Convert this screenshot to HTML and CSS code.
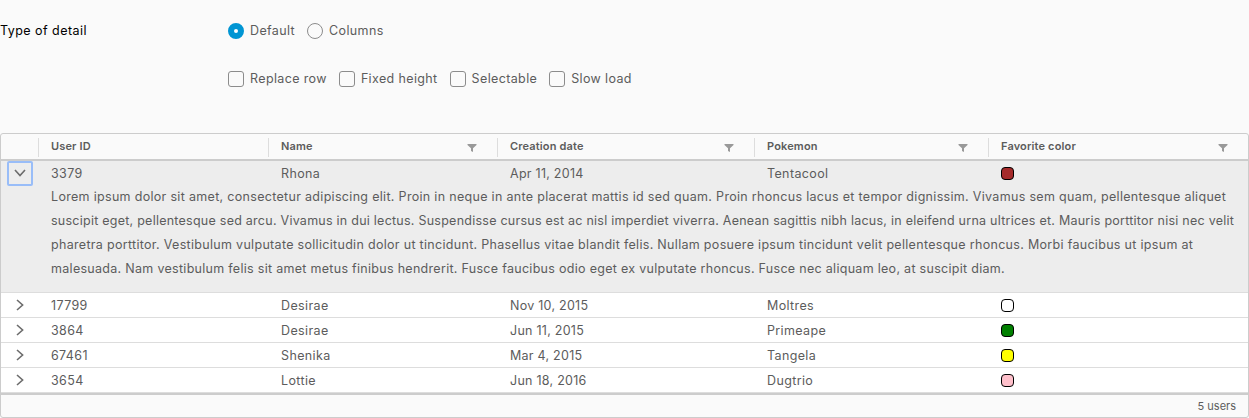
FILE: index.html
```
<!DOCTYPE html>
<html lang="en">
<head>
<meta charset="utf-8">
<title>Datagrid detail</title>
<link rel="stylesheet" href="styles.css">
</head>
<body>
<svg class="defs" width="0" height="0">
  <symbol id="chevron" viewBox="0 0 12 12"><path d="M3 1 8.6 6 3 11" fill="none" stroke="#6c6c6c" stroke-width="1.6"/></symbol>
  <symbol id="filter" viewBox="0 0 10 8"><path d="M.5 0h9v1L6 4.3V8L4 7V4.3L.5 1z" fill="#999"/></symbol>
</svg>
<form class="options">
  <div class="group">
    <span class="title">Type of detail</span>
    <label class="option"><i class="radio on"></i><span>Default</span></label>
    <label class="option"><i class="radio"></i><span>Columns</span></label>
  </div>
  <div class="group">
    <span class="title"></span>
    <label class="option"><i class="check"></i><span>Replace row</span></label>
    <label class="option"><i class="check"></i><span>Fixed height</span></label>
    <label class="option"><i class="check"></i><span>Selectable</span></label>
    <label class="option"><i class="check"></i><span>Slow load</span></label>
  </div>
</form>
<main class="datagrid">
  <div class="row head">
    <div></div>
    <div class="col">User ID</div>
    <div class="col">Name<svg class="filter"><use href="#filter"/></svg></div>
    <div class="col">Creation date<svg class="filter"><use href="#filter"/></svg></div>
    <div class="col">Pokemon<svg class="filter"><use href="#filter"/></svg></div>
    <div class="col">Favorite color<svg class="filter"><use href="#filter"/></svg></div>
  </div>
  <div class="expanded">
    <div class="row">
      <button class="caret focus"><svg class="chevron down"><use href="#chevron"/></svg></button>
      <div class="cell">3379</div><div class="cell">Rhona</div><div class="cell date">Apr 11, 2014</div><div class="cell">Tentacool</div><div class="cell"><i class="swatch brown"></i></div>
    </div>
    <p class="detail">
      <span class="line first">Lorem ipsum dolor sit amet, consectetur adipiscing elit. Proin in neque in ante placerat mattis id sed quam. Proin rhoncus lacus et tempor dignissim. Vivamus sem quam, pellentesque aliquet</span>
      <span class="line second">suscipit eget, pellentesque sed arcu. Vivamus in dui lectus. Suspendisse cursus est ac nisl imperdiet viverra. Aenean sagittis nibh lacus, in eleifend urna ultrices et. Mauris porttitor nisi nec velit</span>
      <span class="line third">pharetra porttitor. Vestibulum vulputate sollicitudin dolor ut tincidunt. Phasellus vitae blandit felis. Nullam posuere ipsum tincidunt velit pellentesque rhoncus. Morbi faucibus ut ipsum at</span>
      <span class="line fourth">malesuada. Nam vestibulum felis sit amet metus finibus hendrerit. Fusce faucibus odio eget ex vulputate rhoncus. Fusce nec aliquam leo, at suscipit diam.</span>
    </p>
  </div>
  <div class="row item">
    <button class="caret"><svg class="chevron"><use href="#chevron"/></svg></button>
    <div class="cell">17799</div><div class="cell">Desirae</div><div class="cell date">Nov 10, 2015</div><div class="cell">Moltres</div><div class="cell"><i class="swatch white"></i></div>
  </div>
  <div class="row item">
    <button class="caret"><svg class="chevron"><use href="#chevron"/></svg></button>
    <div class="cell">3864</div><div class="cell">Desirae</div><div class="cell date">Jun 11, 2015</div><div class="cell">Primeape</div><div class="cell"><i class="swatch green"></i></div>
  </div>
  <div class="row item">
    <button class="caret"><svg class="chevron"><use href="#chevron"/></svg></button>
    <div class="cell">67461</div><div class="cell">Shenika</div><div class="cell date">Mar 4, 2015</div><div class="cell">Tangela</div><div class="cell"><i class="swatch yellow"></i></div>
  </div>
  <div class="row item">
    <button class="caret"><svg class="chevron"><use href="#chevron"/></svg></button>
    <div class="cell">3654</div><div class="cell">Lottie</div><div class="cell date">Jun 18, 2016</div><div class="cell">Dugtrio</div><div class="cell"><i class="swatch pink"></i></div>
  </div>
  <footer class="foot">5 users</footer>
</main>
</body>
</html>
```
FILE: styles.css
```
* { box-sizing: border-box; }
body {
  margin: 0;
  height: 418px;
  background: #fafafa;
  color: #5c5c5c;
  font: 12.5px/24px Inter, sans-serif;
  letter-spacing: 0.37px;
  overflow: hidden;
}
.defs { display: block; height: 0; }
.options { height: 133px; padding-top: 19px; }
.group { display: flex; gap: 12px; height: 48px; align-items: flex-start; }
.title { width: 216px; color: #000; letter-spacing: 0.46px; line-height: 23px; }
.option { display: flex; align-items: center; gap: 6px; height: 24px; white-space: nowrap; }
.option span { line-height: 22px; padding-bottom: 1px; }
.radio, .check { width: 16px; height: 16px; border: 1px solid #8c8c8c; }
.radio { border-radius: 50%; }
.radio.on { border: 6px solid #0095d3; background: #fff; }
.check { border-radius: 3px; }

.datagrid { height: 285px; border: 1px solid #ccc; border-radius: 3px; }
.row {
  display: grid;
  grid-template-columns: 37px 230px 229px 257px 234px 1fr;
}
.head {
  height: 27px;
  border-bottom: 2px solid #ccc;
  font-size: 11px;
  font-weight: 600;
  letter-spacing: 0.15px;
}
.col {
  display: flex;
  justify-content: space-between;
  height: 19px;
  margin-top: 4px;
  padding: 0 20px 0 12px;
  border-left: 1px solid #ddd;
  line-height: 17px;
}
.filter { width: 10px; height: 8px; margin-top: 6px; }
.expanded { height: 132px; background: #ededed; border-bottom: 1px solid #ddd; }
.expanded .row { height: 24px; }
.cell { display: flex; align-items: center; padding-left: 13px; height: 25px; }
.date { letter-spacing: 0.26px; }
.caret {
  display: flex;
  align-items: center;
  justify-content: center;
  width: 26px;
  height: 25px;
  margin-left: 6px;
  padding: 0 0 1px;
  border: 2px solid transparent;
  border-radius: 2px;
  background: none;
}
.focus { border-color: #99bdf8; }
.chevron { width: 12px; height: 12px; }
.down { transform: rotate(90deg); }
.detail { margin: 0; padding-left: 50px; }
.line { display: block; white-space: nowrap; line-height: 23px; padding-bottom: 1px; }
.first { letter-spacing: 0.312px; }
.second { letter-spacing: 0.248px; }
.third { letter-spacing: 0.307px; }
.fourth { letter-spacing: 0.293px; }
.item { height: 25px; background: #fff; border-bottom: 1px solid #ddd; }
.swatch { width: 13px; height: 13px; border: 1px solid #000; border-radius: 4px; }
.brown { background: brown; }
.white { background: white; }
.green { background: green; }
.yellow { background: yellow; }
.pink { background: pink; }
.foot {
  height: 24px;
  padding-right: 12px;
  border-top: 2px solid #ccc;
  font-size: 11px;
  letter-spacing: 0;
  line-height: 23px;
  text-align: right;
}
```
